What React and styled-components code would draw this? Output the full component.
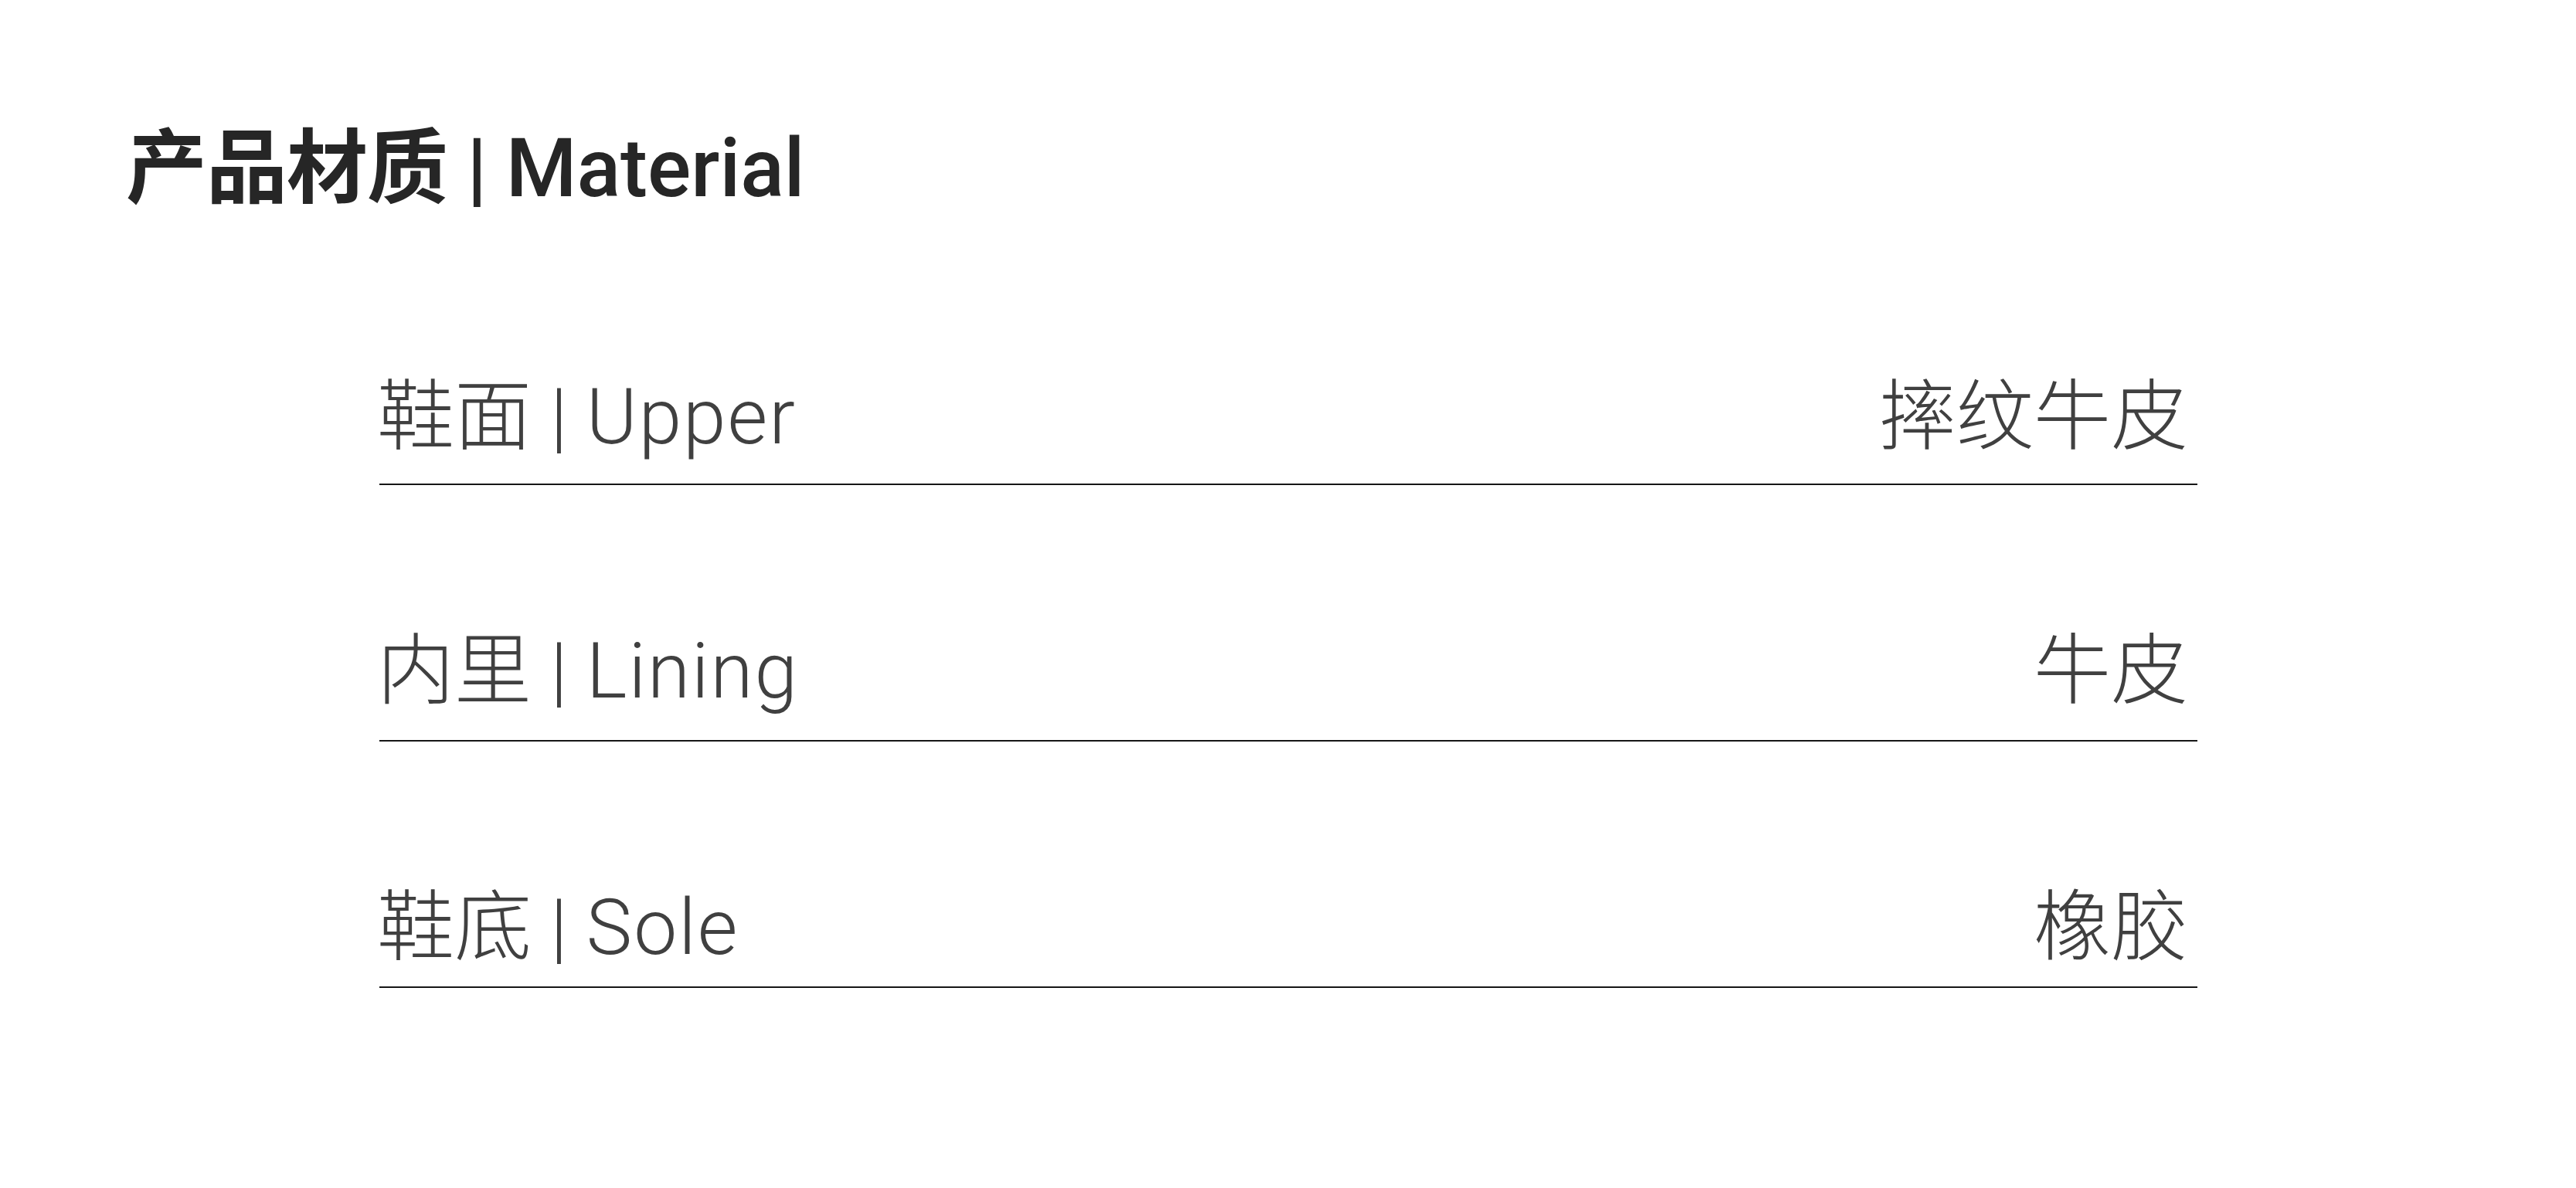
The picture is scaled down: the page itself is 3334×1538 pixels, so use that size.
import styled, { createGlobalStyle } from "styled-components"

const GlobalStyle = createGlobalStyle`
    html, body {
        margin: 0;
        padding: 0;
        background: #fff;
    }
    body {
        font-family: Roboto, "Noto Sans CJK SC", sans-serif;
    }
`;

const materials = [
    { part: "鞋面", en: "Upper", value: "摔纹牛皮", pad: 36 },
    { part: "内里", en: "Lining", value: "牛皮", pad: 39 },
    { part: "鞋底", en: "Sole", value: "橡胶", pad: 26 },
];

const App = () => {
    return (
        <Page>
            <GlobalStyle />
            <Title>
                <TitleCn>产品材质 | </TitleCn>
                <TitleEn>Material</TitleEn>
            </Title>
            <List>
                {materials.map((m) => (
                    <Row key={m.en} pad={m.pad}>
                        <Label>
                            {m.part} | <LabelEn>{m.en}</LabelEn>
                        </Label>
                        <Value>{m.value}</Value>
                    </Row>
                ))}
            </List>
        </Page>
    )
}

const Page = styled.div`
    width: 3334px;
    min-height: 1538px;
    box-sizing: border-box;
    padding: 166px 0 0 0;
    background: #fff;
`;

const Title = styled.h1`
    margin: 0 0 0 163px;
    font-family: Roboto, "Noto Sans CJK SC", sans-serif;
    font-size: 105px;
    line-height: 1;
    color: #262626;
`;

const TitleCn = styled.span`
    font-weight: 700;
    letter-spacing: -1px;
`;

const TitleEn = styled.span`
    font-weight: 500;
`;

const List = styled.div`
    display: flex;
    flex-direction: column;
    gap: 191px;
    margin: 219px 490px 0 491px;
`;

const Row = styled.div.withConfig({
    shouldForwardProp: (prop) => prop !== "pad",
})`
    display: flex;
    align-items: baseline;
    justify-content: space-between;
    padding: 0 12px ${(p) => p.pad}px 0;
    border-bottom: 2px solid #161616;
    font-size: 100px;
    line-height: 1;
    font-weight: 300;
    color: #404040;
`;

const Label = styled.span`
    margin-left: -3px;
`;

const LabelEn = styled.span`
    letter-spacing: 2px;
`;

const Value = styled.span``;

export default App;
